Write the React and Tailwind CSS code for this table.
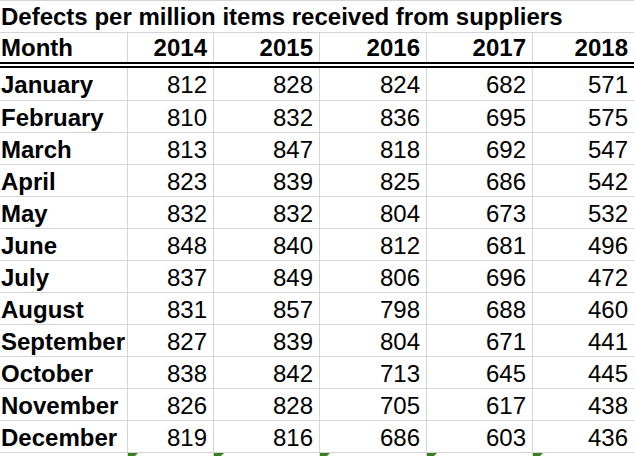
const years = ["2014", "2015", "2016", "2017", "2018"];

const rows = [
  ["January", 812, 828, 824, 682, 571],
  ["February", 810, 832, 836, 695, 575],
  ["March", 813, 847, 818, 692, 547],
  ["April", 823, 839, 825, 686, 542],
  ["May", 832, 832, 804, 673, 532],
  ["June", 848, 840, 812, 681, 496],
  ["July", 837, 849, 806, 696, 472],
  ["August", 831, 857, 798, 688, 460],
  ["September", 827, 839, 804, 671, 441],
  ["October", 838, 842, 713, 645, 445],
  ["November", 826, 828, 705, 617, 438],
  ["December", 819, 816, 686, 603, 436],
];

// column widths incl. the 1px right gridline
const colW = ["w-[128px]", "w-[86px]", "w-[106px]", "w-[107px]", "w-[106px]", "flex-1"];

export default function App() {
  return (
    <div className="w-[634px] h-[456px] overflow-hidden bg-white text-black font-['Liberation_Sans',Arial,sans-serif] text-[24px]">
      {/* title row */}
      <div className="h-[33px] border-y border-[#d4d4d4] pl-[1px] font-bold leading-[29px] pt-[1px] whitespace-nowrap">
        Defects per million items received from suppliers
      </div>

      {/* header row */}
      <div className="flex h-[35px] border-b-[6px] border-double border-black font-bold">
        {["Month", ...years].map((h, i) => (
          <div
            key={h}
            className={`${colW[i]} shrink-0 h-full leading-[28px] pt-[1px] ${
              i === 0 ? "pl-[1px]" : "text-right pr-[6px]"
            } ${i < 5 ? "border-r border-[#d4d4d4]" : ""}`}
          >
            {h}
          </div>
        ))}
      </div>

      {/* data rows */}
      {rows.map((r, ri) => (
        <div
          key={r[0]}
          className={`flex border-b border-[#d4d4d4] ${ri === 0 ? "h-[33px]" : "h-[32px]"}`}
        >
          {r.map((v, i) => (
            <div
              key={i}
              className={`${colW[i]} shrink-0 h-full leading-[29px] pt-[2px] whitespace-nowrap ${
                i === 0 ? "pl-[1px] font-bold" : "text-right pr-[6px]"
              } ${i < 5 ? "border-r border-[#d4d4d4]" : ""}`}
            >
              {v}
            </div>
          ))}
        </div>
      ))}

      {/* next row: only the tops of the green error markers show */}
      <div className="flex h-[10px]">
        {colW.map((w, i) => (
          <div key={i} className={`${w} shrink-0 h-full ${i < 5 ? "border-r border-[#d4d4d4]" : ""}`}>
            {i > 0 && (
              <div className="w-0 h-0 border-t-[10px] border-r-[10px] border-t-[#3a7d22] border-r-transparent" />
            )}
          </div>
        ))}
      </div>
    </div>
  );
}
